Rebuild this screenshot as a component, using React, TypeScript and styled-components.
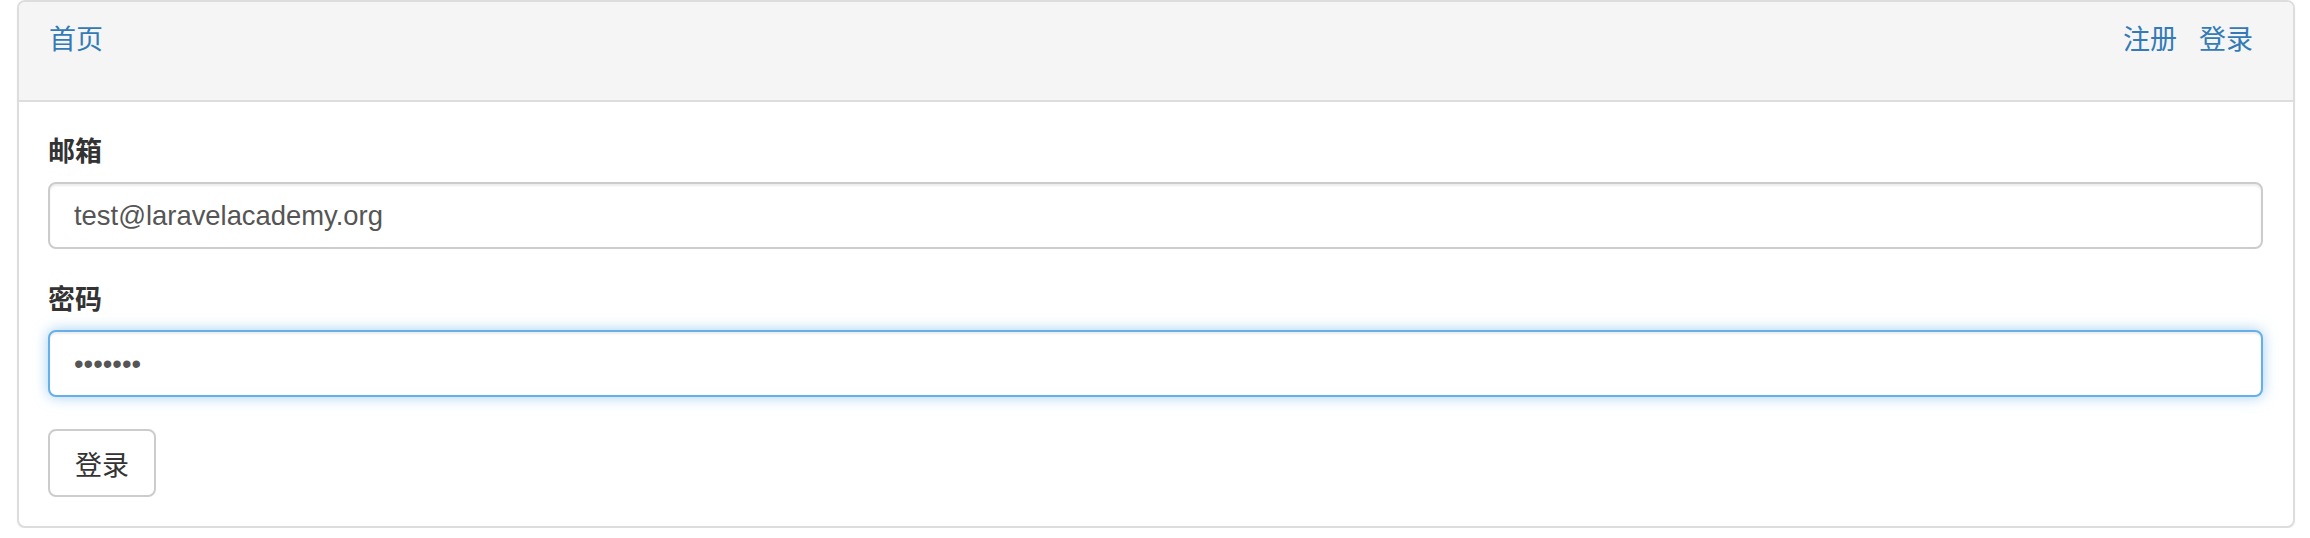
import styled, { createGlobalStyle } from "styled-components";

const GlobalStyle = createGlobalStyle`
  html, body {
    margin: 0;
    padding: 0;
    background: #fff;
  }
  body {
    font-family: "Liberation Sans", "Noto Sans CJK SC", sans-serif;
    color: #333;
  }
`;

const Page = styled.div`
  padding: 0 15px 0 17px;
`;

const Panel = styled.div`
  border: 2px solid #ddd;
  border-radius: 8px;
  background: #fff;
  box-shadow: 0 1px 2px rgba(0, 0, 0, 0.05);
  overflow: hidden;
`;

const Heading = styled.div`
  display: flex;
  justify-content: space-between;
  align-items: center;
  background: #f5f5f5;
  border-bottom: 2px solid #ddd;
  padding: 19px 40px 40px 30px;
  height: 39px;
`;

const NavGroup = styled.div`
  display: flex;
  gap: 22px;
`;

const NavLink = styled.a`
  color: #337ab7;
  font-size: 27px;
  line-height: 39px;
  text-decoration: none;
  cursor: pointer;
`;

const Body = styled.form`
  padding: 31px 30px 29px 29px;
`;

const Group = styled.div`
  margin-bottom: 32px;
`;

const Label = styled.label`
  display: block;
  font-size: 27px;
  font-weight: bold;
  line-height: 39px;
  margin-bottom: 10px;
  color: #333;
`;

const Input = styled.input<{ $focused?: boolean }>`
  display: block;
  box-sizing: border-box;
  width: 100%;
  height: 67px;
  padding: 0 24px;
  font-family: "Liberation Sans", "Noto Sans CJK SC", sans-serif;
  font-size: 27.4px;
  color: #555;
  background: #fff;
  border: 2px solid ${(p) => (p.$focused ? "#66afe9" : "#ccc")};
  border-radius: 8px;
  outline: none;
  box-shadow: inset 0 2px 2px rgba(0, 0, 0, 0.075)
    ${(p) => (p.$focused ? ", 0 0 14px rgba(102, 175, 233, 0.6)" : "")};
`;

const Button = styled.button`
  display: block;
  box-sizing: border-box;
  height: 68px;
  padding: 0 25px;
  font-family: "Liberation Sans", "Noto Sans CJK SC", sans-serif;
  font-size: 27px;
  color: #333;
  background: #fff;
  border: 2px solid #ccc;
  border-radius: 8px;
  cursor: pointer;
`;

function App() {
  return (
    <Page>
      <GlobalStyle />
      <Panel>
        <Heading>
          <NavLink>首页</NavLink>
          <NavGroup>
            <NavLink>注册</NavLink>
            <NavLink>登录</NavLink>
          </NavGroup>
        </Heading>
        <Body onSubmit={(e) => e.preventDefault()}>
          <Group>
            <Label>邮箱</Label>
            <Input type="email" defaultValue="test@laravelacademy.org" />
          </Group>
          <Group>
            <Label>密码</Label>
            <Input type="password" defaultValue="1234567" $focused />
          </Group>
          <Button type="submit">登录</Button>
        </Body>
      </Panel>
    </Page>
  );
}

export default App;
